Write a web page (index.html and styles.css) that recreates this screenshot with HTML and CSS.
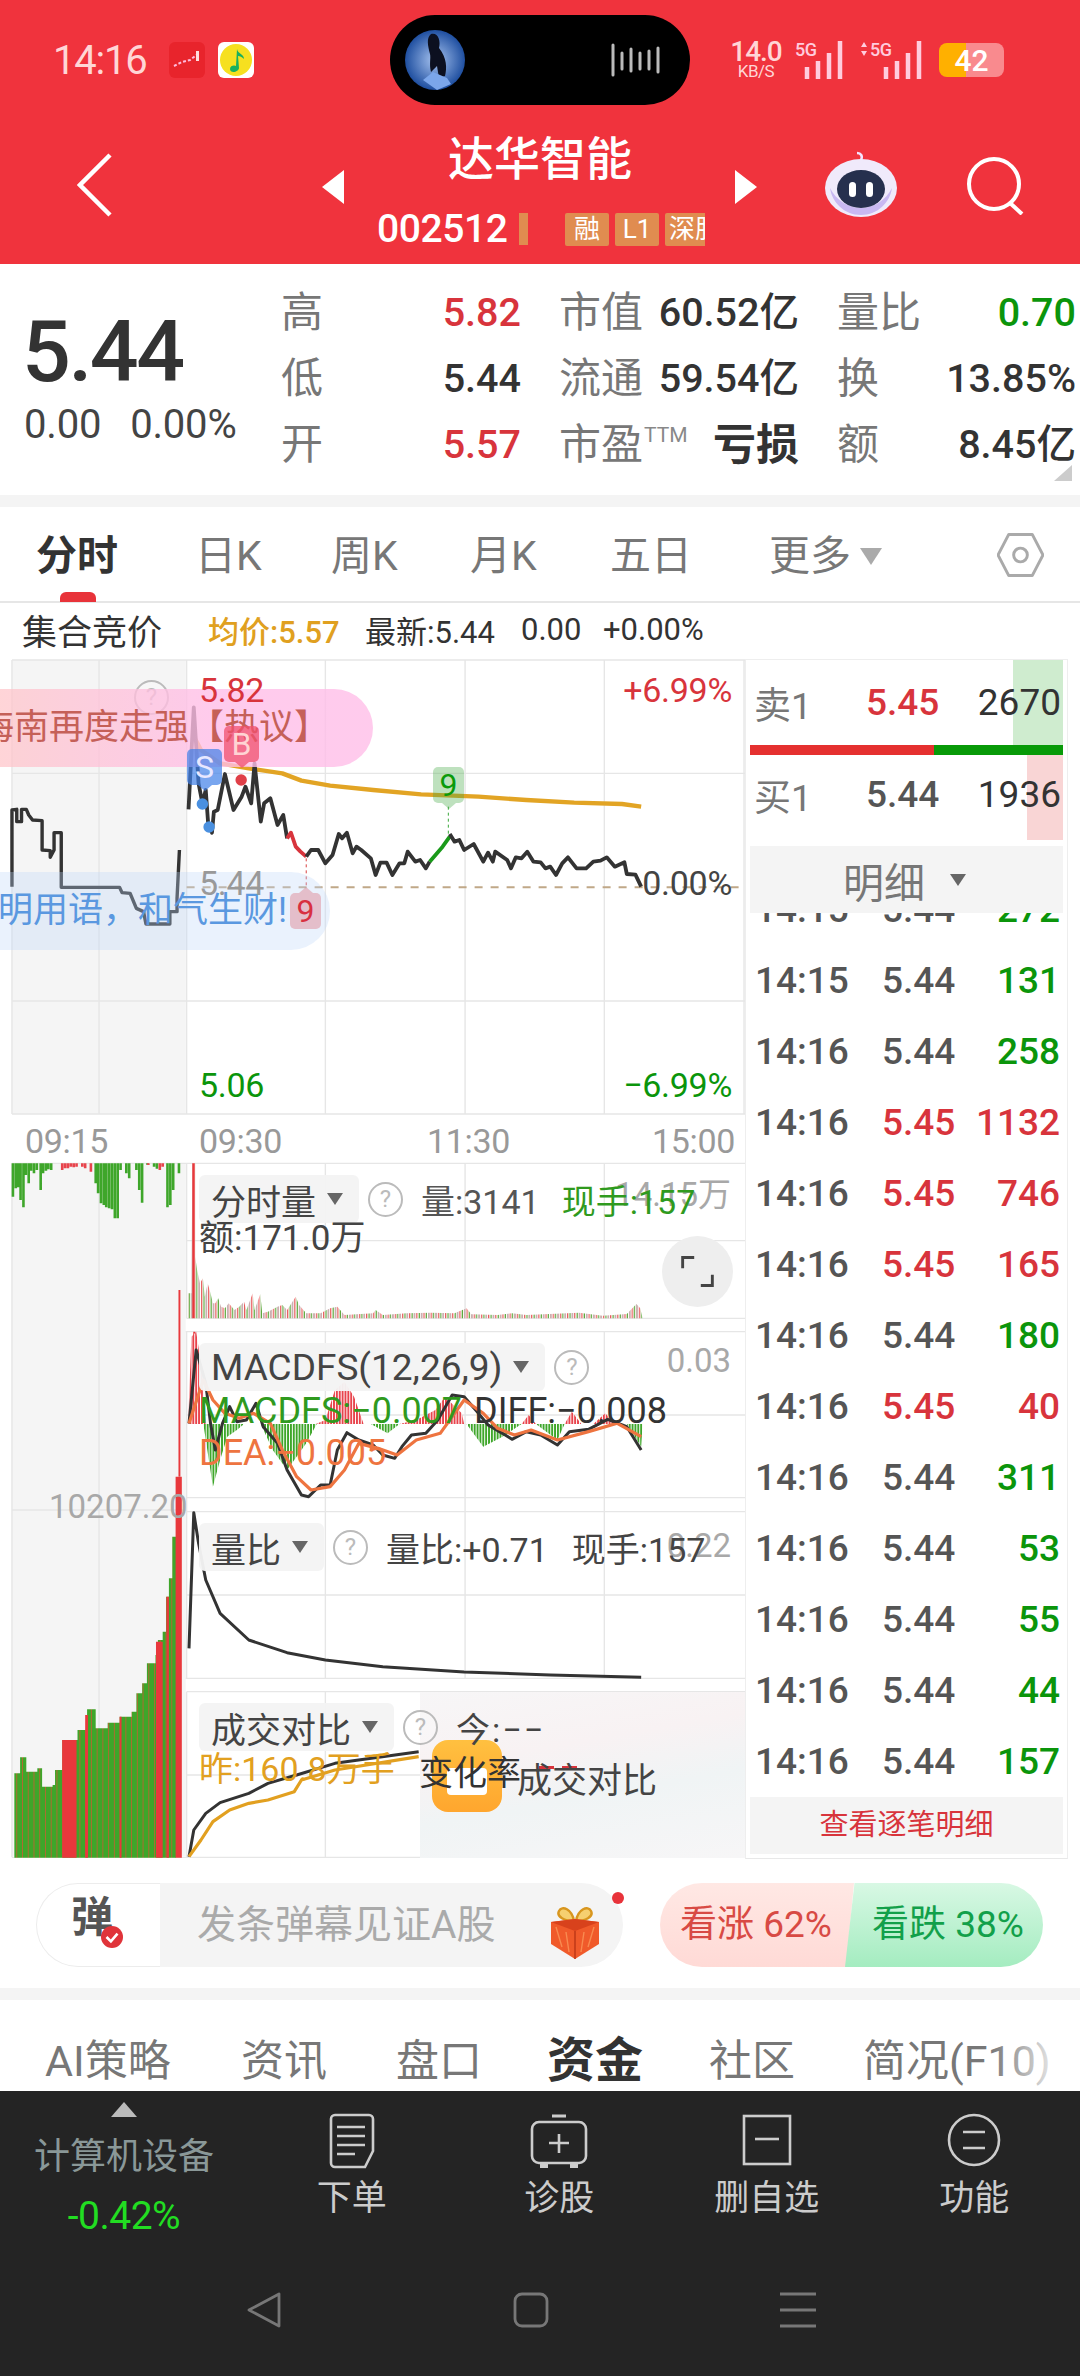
FILE: index.html
```html
<!DOCTYPE html>
<html lang="zh">
<head>
<meta charset="utf-8">
<title>达华智能</title>
<link rel="stylesheet" href="styles.css">
</head>
<body>
<div class="page">
  <header class="header">
    <div class="status">
      <span class="clock">14:16</span>
      <svg class="app-icon" viewBox="0 0 36 36"><rect width="36" height="36" rx="6" fill="#e8242c"/><path d="M5 24l8-4 8-2 9-7" fill="none" stroke="#fbd" stroke-width="2" stroke-dasharray="3 2"/><rect x="27" y="9" width="3" height="10" fill="#fdd"/></svg>
      <svg class="app-icon" viewBox="0 0 36 36"><rect width="36" height="36" rx="6" fill="#fff"/><circle cx="18" cy="18" r="16" fill="#f6e020"/><path d="M19 7c1 5 7 5 7 10-2-2-4-3-6-3l1 12c0 4-9 6-9 1 0-4 5-4 6-3z" fill="#18b060"/></svg>
      <div class="island">
        <svg class="avatar" viewBox="0 0 60 60"><defs><radialGradient id="av"><stop offset="0" stop-color="#a8c4f0"/><stop offset="1" stop-color="#1f4fa0"/></radialGradient></defs><circle cx="30" cy="30" r="30" fill="url(#av)"/><path d="M26 4c7-2 10 7 8 14 8 10 8 20 6 28l-6 2-2-12-6 6c-2-8 0-14-1-18-2-8-4-16 1-20z" fill="#0c1020"/><path d="M18 50l10-8 14 6 4 6-14 6z" fill="#7ba6ea"/></svg>
        <svg class="wave" viewBox="0 0 50 34"><path d="M2 2v30M11 10v16M20 6v22M29 10v16M38 8v18M47 5v24" stroke="#bbb" stroke-width="3" stroke-linecap="round"/></svg>
      </div>
      <div class="speed"><b>14.0</b><small>KB/S</small></div>
      <svg class="signal" viewBox="0 0 50 38"><text x="0" y="15" class="sig-text">5G</text><path d="M12 38V26M23 38V20M34 38V12M45 38V0" stroke="#fcd" stroke-width="4.5"/></svg>
      <svg class="signal wide" viewBox="0 0 64 38"><path d="M4 1l3 5H1zM4 15l3-5H1z" fill="#fcd"/><text x="10" y="15" class="sig-text">5G</text><path d="M26 38V26M37 38V20M48 38V12M59 38V0" stroke="#fcd" stroke-width="4.5"/></svg>
      <div class="battery"><span class="battery-num">42</span></div>
    </div>
    <div class="titlebar">
      <svg class="back" viewBox="0 0 36 64"><path d="M33 2L3 32l30 30" fill="none" stroke="#fff" stroke-width="4.5"/></svg>
      <svg class="arrow-l" viewBox="0 0 22 34"><path d="M22 0v34L0 17z" fill="#fff"/></svg>
      <div class="title-block">
        <div class="title">达华智能</div>
        <div class="code-row">
          <span class="code">002512</span><i class="code-bar"></i>
          <div class="tags"><span class="tag">融</span><span class="tag">L1</span><span class="tag tag-cut">深股</span></div>
        </div>
      </div>
      <svg class="arrow-r" viewBox="0 0 22 34"><path d="M0 0v34l22-17z" fill="#fff"/></svg>
      <svg class="robot" viewBox="0 0 72 66"><path d="M36 9c2-4 0-7-4-7" fill="none" stroke="#f4e4ff" stroke-width="2.5"/><ellipse cx="36" cy="37" rx="36" ry="29" fill="#f0eafb"/><path d="M5 37c2 14 14 27 31 27s29-13 31-27c-6 12-18 20-31 20S11 49 5 37z" fill="#c9b8f2"/><ellipse cx="36" cy="38" rx="24" ry="19" fill="#26304e"/><rect x="24" y="31" width="7" height="15" rx="3.5" fill="#fff"/><rect x="41" y="31" width="7" height="15" rx="3.5" fill="#fff"/></svg>
      <svg class="search" viewBox="0 0 60 58"><circle cx="28" cy="27" r="25" fill="none" stroke="#fff" stroke-width="4"/><path d="M44 46l12 11" stroke="#fff" stroke-width="4"/></svg>
    </div>
  </header>

  <section class="quote">
    <div class="price-box">
      <div class="price">5.44</div>
      <div class="change"><span>0.00</span><span>0.00%</span></div>
    </div>
    <div class="stats">
      <div class="stat"><span>高</span><b class="red">5.82</b></div>
      <div class="stat"><span>市值</span><b>60.52亿</b></div>
      <div class="stat"><span>量比</span><b class="green">0.70</b></div>
      <div class="stat"><span>低</span><b>5.44</b></div>
      <div class="stat"><span>流通</span><b>59.54亿</b></div>
      <div class="stat"><span>换</span><b>13.85%</b></div>
      <div class="stat"><span>开</span><b class="red">5.57</b></div>
      <div class="stat"><span>市盈<sup class="ttm">TTM</sup></span><b class="strong">亏损</b></div>
      <div class="stat"><span>额</span><b>8.45亿</b></div>
    </div>
    <i class="corner"></i>
  </section>
  <div class="divider"></div>

  <nav class="tabs">
    <span class="tab active">分时</span><span class="tab">日K</span><span class="tab">周K</span><span class="tab">月K</span><span class="tab">五日</span>
    <span class="tab more">更多<i class="tri tab-tri"></i></span>
    <svg class="hex" viewBox="0 0 48 46"><path d="M12 2h24l11 21-11 21H12L1 23z" fill="none" stroke="#aaa" stroke-width="3" stroke-linejoin="round"/><circle cx="24" cy="23" r="7" fill="none" stroke="#aaa" stroke-width="3"/></svg>
  </nav>
  <div class="subrow">
    <span class="auction">集合竞价</span><span class="avg">均价:5.57</span><span class="latest">最新:5.44</span><span class="chg">0.00</span><span class="pct">+0.00%</span>
  </div>

  <main class="board">
    <div class="chart">
      <svg class="plot" viewBox="0 0 1557 3660" preserveAspectRatio="none">
        <defs>
          <pattern id="volp" patternUnits="userSpaceOnUse" width="15" height="10"><rect width="15" height="10" fill="#fff"/><rect width="2.5" height="10" fill="#e85a5a"/><rect x="5" width="2.5" height="10" fill="#5aa83a"/><rect x="10" width="2.5" height="10" fill="#b08a8a"/></pattern>
          <pattern id="macdr" patternUnits="userSpaceOnUse" width="6" height="10"><rect width="6" height="10" fill="#fff"/><rect width="4" height="10" fill="#e8444c"/></pattern>
          <pattern id="macdg" patternUnits="userSpaceOnUse" width="6" height="10"><rect width="6" height="10" fill="#fff"/><rect width="4" height="10" fill="#3ea62a"/></pattern>
          <pattern id="lowp" patternUnits="userSpaceOnUse" width="12" height="10"><rect width="12" height="10" fill="#3ea62a"/><rect x="10" width="2" height="10" fill="#b06a30"/></pattern>
        </defs>
        <!-- price panel -->
        <rect x="25" y="30" width="363" height="1362" fill="#f5f5f5"/>
        <g class="grid">
          <path d="M25 30H1557M25 370H1557M25 1053H1557M25 1392H1557M25 30V1392M207 30V1392M390 30V1392M680 30V1392M972 30V1392M1263 30V1392M1555 30V1392"/>
        </g>
        <path class="base" d="M390 712H1557"/>
        <path class="thin-line" d="M25 710V480L35 478V515L45 515V478L55 478L60 495L68 510L88 512V600L105 602L105 622L113 600V548L128 548V712L250 712L255 728L272 730L285 775L300 785L305 822L355 822V785L370 785V745L375 600"/>
        <path class="avgline" d="M405 260L420 300L460 340L520 355L590 370L630 392L690 407L780 420L880 433L1000 440L1100 450L1200 458L1300 462L1340 470"/>
        <path class="priceline" d="M394 478L405 172L415 400L423 460L430 420L435 520L443 548L447 485L455 480L470 372L488 480L505 440L513 410L525 460L532 340L545 515L552 460L565 445L580 525L592 495L600 565"/>
        <path class="priceline red-s" d="M600 565L608 548L618 590L628 605L640 620"/>
        <path class="priceline" d="M640 620L650 600L665 600L680 640L695 615L708 552L715 565L725 548L737 610L745 590L755 600L775 625L785 675L795 638L808 638L820 675L835 640L845 640L852 605L868 635L878 630L890 655L898 635"/>
        <path class="priceline green-s" d="M898 635L925 590L940 560"/>
        <path class="priceline" d="M940 552L950 575L960 570L970 600L990 582L1010 635L1020 608L1030 635L1035 605L1060 630L1068 655L1078 622L1090 625L1102 605L1115 635L1130 637L1140 655L1150 650L1162 675L1175 640L1187 622L1205 655L1225 655L1240 635L1255 632L1268 622L1285 650L1305 637L1310 672L1328 674L1340 710"/>
        <path class="dash-g" d="M937 470V552"/>
        <path class="dash-r" d="M640 625V715"/>
        <ellipse cx="423" cy="462" rx="12" ry="17" fill="#4a90e0"/><ellipse cx="437" cy="531" rx="12" ry="17" fill="#4a90e0"/><ellipse cx="504" cy="390" rx="12" ry="17" fill="#e04048"/>

        <!-- lower panels: coordinates offset by crop origin -->
        <rect x="25" y="1540" width="363" height="2078" fill="#f5f5f5"/>
        <g class="grid">
          <path d="M25 1540H1557M390 1772H1557M390 2005H1557M388 2045H1557M390 2295H1557M390 2543H1557M25 2580H388M390 2585H1557M390 2835H1557M388 3085H1557M390 3125H1557M390 3375H1557M25 3622H1557"/>
          <path d="M25 1540V3622M207 1540V3622M390 1540V2005M390 2045V3085M390 3125V3622M680 1540V2005M680 2045V3085M680 3125V3622M972 1540V2005M972 2045V3085M1263 1540V2005M1263 2045V3085"/>
        </g>
        <g transform="translate(0 1500)">
          <path class="hang" d="M27 40V140M33 40V115M38 40V112M43 40V150M49 40V172M54 40V75M60 40V100M65 40V62M71 40V70M77 40V60M85 40V120M90 40V70M96 40V62M101 40V58M107 40V60M200 40V100M205 40V130M211 40V160M217 40V165M222 40V172M228 40V175M234 40V178M240 40V205M246 40V205M252 40V60M264 40V70M270 40V85M285 40V60M291 40V120M297 40V158M308 40V44M322 40V50M328 40V56M350 40V172M356 40V165M362 40V120M374 40V70"/>
          <path class="hang-r" d="M130 40V60M136 40V55M142 40V55M148 40V50M154 40V52M160 40V50M172 40V50M178 40V55M190 40V65M310 40V45M334 40V60M340 40V50"/>
          <path fill="url(#volp)" d="M393 505V430H400L402 40H408V320L412 360L418 400L424 385L428 440L434 400L440 430L445 460L450 460L456 445L462 470L470 475L478 460L490 480L500 470L510 455L515 480L528 430L532 480L544 432L548 490L560 485L580 470L590 465L600 480L618 440L625 465L640 490L670 490L690 475L705 470L720 495L780 490L785 480L800 495L850 490L900 488L950 490L975 475L985 493L1040 495L1070 490L1100 495L1210 488L1260 497L1310 492L1330 462L1338 475L1343 505Z"/>
          <path class="solid-r" d="M404 40V505M406 545V822"/>
          <path fill="url(#macdr)" d="M393 822L400 560L410 545L420 640L430 822ZM660 822L680 810L700 720L720 695L740 740L760 822ZM835 822L870 810L910 780L930 740L965 790L970 822ZM1090 822L1105 795L1120 822ZM1180 822L1195 785L1215 822ZM1240 822L1265 790L1285 822Z"/>
          <path fill="url(#macdg)" d="M425 822L445 1010L460 930L475 860L495 840L510 822ZM545 822L570 900L600 960L640 880L662 822ZM775 822L810 850L835 822ZM975 822L1010 890L1050 860L1090 822ZM1120 822L1165 870L1180 822ZM1310 822L1340 890L1343 822Z"/>
          <path class="macd-k" d="M395 820L410 600L430 700L440 820L450 900L465 820L480 770L495 815L515 810L535 760L550 830L580 880L600 960L630 1035L645 1040L670 1005L690 1005L705 900L725 848L750 870L780 885L800 915L825 925L840 890L860 855L890 850L915 810L945 735L970 740L1000 790L1020 825L1050 850L1070 868L1100 845L1130 855L1165 885L1190 845L1230 838L1270 808L1310 830L1340 900"/>
          <path class="macd-o" d="M395 820L425 690L445 750L470 790L500 805L530 790L565 820L590 900L620 980L650 1020L690 1010L720 960L750 880L790 895L830 915L870 870L920 850L970 750L1010 790L1040 835L1075 855L1110 840L1165 870L1230 845L1290 820L1340 860"/>
        </g>
        <g transform="translate(0 2550)">
          <path fill="url(#lowp)" d="M30 1073V820H42V772H55V815H78V805H88V860H110V855H115V810H130V720H162V690H182V628H200V685H225V668H250V650H275V635H285V580H297V550H307V490H325V465H330V420H340V395H347V290H353V235H360V110H368V1073Z"/>
          <path fill="#e8383c" d="M130 1073V720H160V1073ZM178 1073V645H184V1073ZM250 1073V650H254V1073ZM326 1073V425H340V1073ZM348 1073V290H353V1073ZM367 1073V-70H380V1073Z"/>
          <path fill="#e8383c" d="M373 -70V-630H377V-70Z"/>
          <path class="macd-k" d="M395 445L405 38L415 130L430 240L460 340L520 420L600 458L680 480L800 500L970 516L1150 525L1340 532"/>
          <path class="macd-k" d="M395 1070L405 990L430 940L460 908L520 880L560 850L620 825L700 790L875 755"/>
          <path class="cmp-o" d="M395 1070L420 1020L445 965L480 930L520 910L560 900L615 875L630 840L700 810L875 770"/>
        </g>
      </svg>

      <i class="help help-top">?</i>
      <div class="danmu pink">海南再度走强【热议】</div>
      <div class="danmu blue">明用语，和气生财!</div>
      <span class="axis a-high red">5.82</span>
      <span class="axis a-low green">5.06</span>
      <span class="axis a-base">5.44</span>
      <span class="axis a-up red">+6.99%</span>
      <span class="axis a-zero">0.00%</span>
      <span class="axis a-down green">−6.99%</span>
      <div class="times"><span>09:15</span><span>09:30</span><span>11:30</span><span>15:00</span></div>
      <span class="flag flag-s">S</span>
      <span class="flag flag-b">B</span>
      <span class="flag flag-g">9</span>
      <span class="flag flag-r">9</span>

      <span class="side-num n-1415">14.15万</span>
      <div class="legend lg-vol">
        <div class="legend-row">
          <span class="chip">分时量<i class="tri"></i></span><i class="help">?</i>
          <span class="lg-a">量:3141</span><span class="lg-b green2">现手:157</span>
        </div>
        <div class="lg-amt">额:171.0万</div>
      </div>
      <button class="expand" type="button"><svg viewBox="0 0 40 40"><path d="M2 16V3h14M38 24v13H24" fill="none" stroke="#444" stroke-width="3.5"/></svg></button>

      <span class="side-num n-003">0.03</span>
      <div class="legend lg-macd">
        <div class="legend-row">
          <span class="chip chip-macd">MACDFS(12,26,9)<i class="tri"></i></span><i class="help">?</i>
        </div>
        <div class="macd-vals"><span class="green2">MACDFS:−0.007</span><span class="diff">DIFF:−0.008</span></div>
        <div class="dea">DEA:−0.005</div>
      </div>
      <span class="vol-max">10207.20</span>

      <span class="side-num n-022">0.22</span>
      <div class="legend lg-ratio">
        <div class="legend-row">
          <span class="chip">量比<i class="tri"></i></span><i class="help">?</i>
          <span class="lg-c">量比:+0.71</span><span class="lg-d">现手:157</span>
        </div>
      </div>

      <div class="toast">
        <div class="toast-app"><i></i></div>
        <i class="toast-dash"></i>
      </div>
      <div class="legend lg-cmp">
        <div class="legend-row">
          <span class="chip">成交对比<i class="tri"></i></span><i class="help">?</i>
          <span class="lg-e">今:−−</span>
        </div>
        <div class="yest">昨:160.8万手</div>
      </div>
      <span class="chg-rate">变化率</span>
      <span class="cmp-title">成交对比</span>
    </div>

    <aside class="side">
      <div class="book sell"><i class="depth"></i><span class="book-l">卖1</span><span class="book-p red">5.45</span><span class="book-v">2670</span></div>
      <div class="ratio"><i class="ratio-r"></i><i class="ratio-g"></i></div>
      <div class="book buy"><i class="depth"></i><span class="book-l">买1</span><span class="book-p">5.44</span><span class="book-v">1936</span></div>
      <div class="detail-head">明细<i class="tri"></i></div>
      <div class="ticks">
        <div class="tick first"><span>14:15</span><span>5.44</span><b class="green">272</b></div>
        <div class="tick"><span>14:15</span><span>5.44</span><b class="green">131</b></div>
        <div class="tick"><span>14:16</span><span>5.44</span><b class="green">258</b></div>
        <div class="tick"><span>14:16</span><span class="red">5.45</span><b class="red">1132</b></div>
        <div class="tick"><span>14:16</span><span class="red">5.45</span><b class="red">746</b></div>
        <div class="tick"><span>14:16</span><span class="red">5.45</span><b class="red">165</b></div>
        <div class="tick"><span>14:16</span><span>5.44</span><b class="green">180</b></div>
        <div class="tick"><span>14:16</span><span class="red">5.45</span><b class="red">40</b></div>
        <div class="tick"><span>14:16</span><span>5.44</span><b class="green">311</b></div>
        <div class="tick"><span>14:16</span><span>5.44</span><b class="green">53</b></div>
        <div class="tick"><span>14:16</span><span>5.44</span><b class="green">55</b></div>
        <div class="tick"><span>14:16</span><span>5.44</span><b class="green">44</b></div>
        <div class="tick"><span>14:16</span><span>5.44</span><b class="green">157</b></div>
      </div>
      <div class="detail-link">查看逐笔明细</div>
    </aside>
  </main>

  <section class="action-row">
    <div class="comment">
      <div class="dan"><b>弹</b><i class="dan-check"><svg viewBox="0 0 20 20"><path d="M5 10l4 4 6-7" fill="none" stroke="#fff" stroke-width="2.4"/></svg></i></div>
      <div class="comment-input">
        <span>发条弹幕见证A股</span>
        <svg class="gift" viewBox="0 0 50 52"><path d="M24 14C22 2 12 -2 9 4c-3 6 6 10 15 10zM26 14C28 2 38 -2 41 4c3 6-6 10-15 10z" fill="#f6d070" stroke="#d8961e" stroke-width="2.4"/><path d="M1 15l24-3 24 3v22L25 52 1 37z" fill="#f05a2a"/><path d="M1 15l24 9 24-9-24-3z" fill="#d8421c"/><path d="M25 24v28" stroke="#c23a18" stroke-width="1.6"/><path d="M6 20l6 20M44 20l-6 20M16 25l3 20M34 25l-3 20" stroke="#f88a50" stroke-width="1.4"/></svg>
        <i class="red-dot"></i>
      </div>
    </div>
    <div class="vote">
      <div class="bull">看涨 62%</div>
      <div class="bear">看跌 38%</div>
    </div>
  </section>
  <div class="divider"></div>

  <nav class="subtabs">
    <span>AI策略</span><span>资讯</span><span>盘口</span><span class="on">资金</span><span>社区</span><span>简况(F10)</span>
    <i class="fade"></i>
  </nav>

  <footer class="footer">
    <div class="toolbar">
      <div class="sector">
        <i class="sector-tri"></i>
        <span class="sector-name">计算机设备</span>
        <span class="sector-pct">-0.42%</span>
      </div>
      <div class="tool">
        <svg class="tool-icon" viewBox="0 0 58 56"><path d="M12 2h34a4 4 0 0 1 4 4v32l-8 16H12a4 4 0 0 1-4-4V6a4 4 0 0 1 4-4z" fill="none" stroke="#ccc" stroke-width="2.6"/><path d="M14 14h28M14 23h28M14 32h28M14 41h18" stroke="#ccc" stroke-width="2.6"/></svg>
        <span>下单</span>
      </div>
      <div class="tool">
        <svg class="tool-icon" viewBox="0 0 58 56"><path d="M22 3h14" stroke="#ccc" stroke-width="3"/><rect x="2" y="9" width="54" height="41" rx="7" fill="none" stroke="#ccc" stroke-width="2.6"/><path d="M29 21v19M19 30h20" stroke="#ccc" stroke-width="2.6"/><path d="M10 50h8v5h-8zM40 50h8v5h-8z" fill="#ccc"/></svg>
        <span>诊股</span>
      </div>
      <div class="tool">
        <svg class="tool-icon" viewBox="0 0 58 56"><rect x="6" y="3" width="46" height="48" fill="none" stroke="#ccc" stroke-width="2.6"/><path d="M17 26h24" stroke="#ccc" stroke-width="2.6"/></svg>
        <span>删自选</span>
      </div>
      <div class="tool">
        <svg class="tool-icon" viewBox="0 0 58 56"><circle cx="29" cy="27" r="25" fill="none" stroke="#ccc" stroke-width="2.6"/><path d="M18 19h22M18 35h22" stroke="#ccc" stroke-width="2.6"/></svg>
        <span>功能</span>
      </div>
    </div>
    <div class="sysbar">
      <svg viewBox="0 0 36 36"><path d="M33 2v32L3 18z" fill="none" stroke="#777" stroke-width="2.8" stroke-linejoin="round"/></svg>
      <svg viewBox="0 0 36 36"><rect x="2" y="2" width="32" height="32" rx="7" fill="none" stroke="#777" stroke-width="2.8"/></svg>
      <svg viewBox="0 0 36 36"><path d="M0 2h36M0 18h36M0 34h36" stroke="#777" stroke-width="3.2"/></svg>
    </div>
  </footer>
</div>
</body>
</html>
```

FILE: styles.css
```css
* { box-sizing: border-box; }
html, body { margin: 0; padding: 0; }
body { width: 1080px; height: 2376px; overflow: hidden; background: #fff; }
.page {
  width: 1080px; height: 2376px; overflow: hidden; position: relative;
  font-family: Roboto, "Noto Sans CJK SC", sans-serif; color: #333;
}
i { font-style: normal; display: block; }
.red { color: #d8343c; }
.green { color: #0b950b; }
.green2 { color: #2f9a1e; }

/* header */
.header { height: 264px; background: #f0333d; color: #fff; padding-top: 15px; }
.status { height: 90px; display: flex; align-items: center; position: relative; padding-left: 53px; }
.clock { width: 116px; font-size: 40px; color: #ffd6d6; letter-spacing: -1.2px; }
.app-icon { width: 36px; height: 36px; margin-right: 13px; }
.island {
  position: absolute; left: 390px; top: 0; width: 300px; height: 90px;
  background: #000; border-radius: 45px; display: flex; align-items: center;
  padding: 0 29px 0 15px; justify-content: space-between;
}
.avatar { width: 60px; height: 60px; }
.wave { width: 50px; height: 34px; }
.speed { position: absolute; left: 729px; top: 25px; display: flex; flex-direction: column; align-items: center; color: #ffd6d6; width: 54px; }
.speed b { font-size: 28px; line-height: 24px; font-weight: 500; letter-spacing: -1px; }
.speed small { font-size: 17px; line-height: 15px; letter-spacing: -0.5px; }
.signal { position: absolute; left: 795px; top: 26px; width: 50px; height: 38px; }
.signal.wide { left: 860px; width: 64px; }
.sig-text { font: 500 18px Roboto, sans-serif; fill: #fcd; letter-spacing: -0.6px; }
.battery {
  position: absolute; left: 939px; top: 28px; width: 65px; height: 34px; border-radius: 8px;
  background: linear-gradient(90deg, #ffb000 0 42%, #f98a8e 42% 100%);
  display: flex; align-items: center; justify-content: center;
}
.battery-num { color: #fff; font-size: 30px; font-weight: 500; }

.titlebar { height: 159px; position: relative; }
.back { position: absolute; left: 77px; top: 48px; width: 36px; height: 64px; }
.arrow-l { position: absolute; left: 322px; top: 65px; width: 22px; height: 34px; }
.arrow-r { position: absolute; left: 735px; top: 65px; width: 22px; height: 34px; }
.robot { position: absolute; left: 825px; top: 46px; width: 72px; height: 66px; }
.search { position: absolute; left: 966px; top: 52px; width: 60px; height: 58px; }
.title-block { position: absolute; left: 377px; top: 27px; width: 328px; }
.title { text-align: center; font-size: 46px; line-height: 54px; width: 326px; font-weight: 500; }
.code-row { display: flex; align-items: center; height: 38px; margin-top: 24px; }
.code { font-size: 39px; font-weight: 500; width: 142px; letter-spacing: -0.4px; }
.code-bar { width: 9px; height: 32px; background: #e08c50; }
.tags { display: flex; gap: 6px; margin-left: 37px; overflow: hidden; width: 140px; }
.tag {
  flex: none; width: 44px; height: 33px; background: #e08c50; color: #fff; font-size: 26px;
  line-height: 33px; text-align: center; border-radius: 2px; overflow: hidden; white-space: nowrap;
}
.tag-cut { width: 43px; text-align: left; padding-left: 4px; }

/* quote */
.quote { height: 231px; display: flex; position: relative; }
.price-box { width: 281px; padding: 36px 0 0 22px; }
.price { font-size: 86px; line-height: 104px; font-weight: 500; letter-spacing: -2.5px; color: #333; }
.change { display: flex; gap: 29px; font-size: 40px; line-height: 46px; color: #444; margin-top: -2px; letter-spacing: -0.2px; padding-left: 2px; }
.stats {
  display: grid; grid-template-columns: 240px 240px 239px; column-gap: 38px;
  grid-auto-rows: 66px; padding-top: 16px;
}
.stat { display: flex; justify-content: space-between; align-items: center; white-space: nowrap; line-height: 50px; }
.stat span { font-size: 42px; color: #777; display: flex; line-height: 50px; }
.stat b { font-size: 39.5px; font-weight: 500; line-height: 50px; }
.stat b.strong { font-size: 43px; font-weight: 700; color: #333; }
.ttm { font-size: 21px; color: #888; line-height: 30px; margin-left: 1px; }
.corner { position: absolute; left: 1054px; top: 201px; width: 0; height: 0; border-left: 18px solid transparent; border-bottom: 16px solid #ccc; }
.divider { height: 12px; background: #f4f4f4; }

/* time tabs */
.tabs {
  height: 96px; border-bottom: 2px solid #e6e6e6; position: relative; padding: 4px 0 0 36px;
  display: grid; grid-template-columns: 159px 136px 139px 140px 159px auto; align-items: center;
}
.tab { font-size: 41px; color: #777; display: flex; align-items: center; line-height: 50px; }
.tab.active { font-weight: 700; color: #333; }
.tab.active::after {
  content: ""; position: absolute; left: 60px; bottom: -1px; width: 36px; height: 10px;
  background: #e8333a; border-radius: 6px 6px 0 0;
}
.tri { width: 0; height: 0; border-left: 8px solid transparent; border-right: 8px solid transparent; border-top: 12px solid #666; }
.tab-tri { border-width: 17px 11px 0; border-top-color: #aaa; margin-left: 9px; }
.hex { position: absolute; left: 997px; top: 25px; width: 47px; height: 46px; }
.subrow { height: 47px; display: flex; align-items: center; padding: 5px 0 0 22px; font-size: 31px; color: #333; white-space: nowrap; }
.auction { font-size: 35px; width: 186px; font-weight: 400; }
.avg { color: #e0a020; width: 157px; font-weight: 500; }
.latest { width: 156px; }
.chg { width: 82px; }

/* board */
.board { display: flex; height: 1220px; position: relative; }
.chart { width: 745px; height: 1220px; position: relative; flex: none; }
.plot { display: block; width: 745px; height: 1220px; }
.plot path { vector-effect: non-scaling-stroke; }
.grid path { fill: none; stroke: #e6e6e6; stroke-width: 1.4; }
.base { fill: none; stroke: #c0a888; stroke-width: 2; stroke-dasharray: 8 8; }
.thin-line { fill: none; stroke: #333; stroke-width: 3.4; stroke-linejoin: round; }
.avgline { fill: none; stroke: #e2a424; stroke-width: 4.4; stroke-linejoin: round; }
.priceline { fill: none; stroke: #333; stroke-width: 3.8; stroke-linejoin: round; }
.red-s { stroke: #d8343c; }
.green-s { stroke: #1a9a1a; }
.dash-g { fill: none; stroke: #3aa83a; stroke-width: 1; stroke-dasharray: 3 3; }
.dash-r { fill: none; stroke: #d84040; stroke-width: 1; stroke-dasharray: 3 3; }
.hang { fill: none; stroke: #3ea62a; stroke-width: 2.6; }
.hang-r { fill: none; stroke: #e8444c; stroke-width: 2.6; }
.solid-r { fill: none; stroke: #e8383c; stroke-width: 2; }
.macd-k { fill: none; stroke: #333; stroke-width: 3; stroke-linejoin: round; }
.macd-o { fill: none; stroke: #ee7440; stroke-width: 3.2; stroke-linejoin: round; }
.cmp-o { fill: none; stroke: #e2a020; stroke-width: 3.2; stroke-linejoin: round; }

.axis { position: absolute; font-size: 34px; line-height: 40px; white-space: nowrap; letter-spacing: -0.3px; }
.a-high { left: 199px; top: 20px; }
.a-low { left: 199px; top: 415px; }
.a-base { left: 199px; top: 213px; color: #999; }
.a-up { right: 13px; top: 20px; }
.a-zero { right: 13px; top: 213px; color: #444; }
.a-down { right: 13px; top: 415px; }
.times {
  position: absolute; left: 25px; top: 471px; width: 706px; display: grid;
  grid-template-columns: 174px 228px 225px auto; font-size: 34px; line-height: 40px; color: #999; letter-spacing: -0.3px;
}
.times span:last-child { text-align: right; }

.help {
  width: 35px; height: 35px; border: 2.5px solid #bbb; border-radius: 50%; color: #bbb;
  font-size: 24px; line-height: 30px; text-align: center; flex: none; font-style: normal; background: rgba(255,255,255,.2);
}
.help-top { position: absolute; left: 134px; top: 30px; }
.danmu {
  position: absolute; height: 78px; border-radius: 0 39px 39px 0; font-size: 35px; line-height: 78px;
  white-space: nowrap;
}
.danmu.pink {
  left: -21px; top: 39px; width: 394px; padding-left: 0; color: #c56058;
  background: linear-gradient(90deg, rgba(255,196,196,.7), rgba(255,190,232,.8) 60%);
}
.danmu.blue {
  left: -2px; top: 222px; width: 332px; color: #5a98e0;
  background: rgba(190,216,250,.32);
}
.flag { position: absolute; text-align: center; border-radius: 5px; font-size: 32px; }
.flag::after {
  content: ""; position: absolute; left: 50%; margin-left: -7px; top: 100%;
  border-left: 7px solid transparent; border-right: 7px solid transparent; border-top: 6px solid;
}
.flag-s { left: 187px; top: 99px; width: 35px; height: 36px; line-height: 36px; color: #e8e8ff; background: rgba(64,128,232,.7); }
.flag-s::after { border-top-color: rgba(64,128,232,.7); }
.flag-b { left: 224px; top: 76px; width: 35px; height: 36px; line-height: 36px; color: #ffd4d4; background: rgba(240,80,110,.75); }
.flag-b::after { border-top-color: rgba(240,80,110,.75); }
.flag-g { left: 433px; top: 117px; width: 31px; height: 36px; line-height: 36px; color: #0a9a0a; background: rgba(70,170,70,.35); }
.flag-g::after { border-top-color: rgba(70,170,70,.35); }
.flag-r { left: 290px; top: 243px; width: 31px; height: 36px; line-height: 36px; color: #d83040; background: rgba(220,120,130,.42); }
.flag-r::after { top: auto; bottom: 100%; border-top: 0; border-bottom: 6px solid rgba(220,120,130,.42); }

.side-num { position: absolute; right: 14px; font-size: 33px; line-height: 40px; color: #a8a8a8; white-space: nowrap; }
.n-1415 { top: 525px; }
.n-003 { top: 691px; }
.n-022 { top: 876px; }
.legend { position: absolute; left: 199px; white-space: nowrap; font-size: 34px; }
.legend-row { display: flex; align-items: center; height: 48px; }
.chip {
  display: flex; align-items: center; height: 48px; padding: 0 16px 0 12px; background: rgba(244,244,244,.96);
  border-radius: 6px; font-size: 35px; color: #444; margin-right: 9px;
}
.chip .tri { margin-left: 11px; }
.lg-vol { top: 525px; }
.lg-a { margin-left: 18px; color: #555; }
.lg-b { margin-left: 22px; }
.lg-amt { color: #444; line-height: 32px; font-size: 35px; }
.expand {
  position: absolute; left: 662px; top: 586px; width: 71px; height: 71px; border-radius: 50%;
  background: #eee; border: 0; padding: 19px; display: block;
}
.expand svg { display: block; width: 33px; height: 33px; }
.lg-macd { top: 693px; }
.chip-macd { font-size: 37px; }
.macd-vals { display: flex; gap: 12px; font-size: 36px; line-height: 40px; margin-top: 0; }
.diff { color: #333; }
.dea { color: #ee7440; font-size: 36px; line-height: 40px; margin-top: 2px; }
.vol-max { position: absolute; left: 49px; top: 838px; font-size: 33px; line-height: 38px; color: #a8a8a8; }
.lg-ratio { top: 873px; }
.lg-c { margin-left: 18px; color: #444; }
.lg-d { margin-left: 24px; color: #444; }
.lg-cmp { top: 1053px; }
.lg-e { margin-left: 18px; color: #444; letter-spacing: 2px; }
.yest { color: #e2a020; font-size: 34px; line-height: 34px; margin-top: 1px; }
.toast {
  position: absolute; left: 420px; top: 1042px; width: 325px; height: 166px;
  background: linear-gradient(170deg, #f7f6f7 0%, #f8f2f3 35%, #f0f4f5 60%, #f7f6f7 100%);
}
.toast-app { position: absolute; left: 12px; top: 48px; width: 70px; height: 72px; border-radius: 16px; background: linear-gradient(#ffc040, #ffa62e); }
.toast-app i { position: absolute; left: 15px; top: 28px; width: 40px; height: 27px; background: #fff; border-radius: 4px; }
.toast-dash { position: absolute; left: 119px; top: 74px; width: 38px; height: 3px; background: linear-gradient(90deg, #d8343c 0 40%, transparent 40% 60%, #d8343c 60%); }
.chg-rate { position: absolute; left: 419px; top: 1103px; font-size: 34px; line-height: 40px; color: #333; }
.cmp-title { position: absolute; left: 517px; top: 1112px; font-size: 35px; line-height: 40px; color: #444; }

/* order side */
.side {
  width: 323px; height: 1200px; margin-top: 9px; border: 1px solid #eee; border-bottom-color: #e8e8e8;
  padding: 0 4px; display: flex; flex-direction: column; background: #fff; flex: none;
}
.book { height: 85px; display: grid; grid-template-columns: 112px auto 1fr; align-items: center; padding: 0 2px 0 4px; position: relative; font-size: 37px; color: #555; }
.book.buy { padding-bottom: 6px; }
.depth { position: absolute; right: 0; top: 0; bottom: 0; }
.sell .depth { width: 50px; background: #cfeccf; }
.buy .depth { width: 36px; background: #f9d5d5; }
.book span { position: relative; }
.book-l { color: #777; }
.book-p { font-weight: 500; }
.book-v { text-align: right; color: #333; }
.ratio { height: 10px; display: flex; flex: none; }
.ratio-r { width: 184px; background: #e5302f; }
.ratio-g { flex: 1; background: #089a08; }
.detail-head {
  flex: none; height: 67px; margin-top: 6px; background: #f4f4f4; display: flex; align-items: center; padding-left: 93px;
  font-size: 41px; color: #777; position: relative; z-index: 1;
}
.detail-head .tri { margin-left: 25px; }
.ticks { flex: 1; overflow: hidden; }
.tick {
  height: 71px; display: grid; grid-template-columns: 127px auto 1fr; align-items: center;
  padding: 0 3px 0 5px; font-size: 37px; color: #555; font-weight: 500;
}
.tick b { text-align: right; font-weight: 500; }
.tick.first { margin-top: -39px; }
.detail-link {
  flex: none; height: 57px; margin-bottom: 4px; background: #f4f4f4; color: #d8343c; text-align: center;
  font-size: 29px; line-height: 57px;
}

/* comment + vote */
.action-row { height: 118px; padding: 13px 37px 0 36px; display: flex; justify-content: space-between; }
.comment { width: 587px; height: 84px; display: flex; position: relative; }
.dan { width: 124px; flex: none; position: relative; background: #fff; border: 1px solid #ececec; border-right: 0; border-radius: 42px 0 0 42px; }
.dan b { position: absolute; left: 34px; top: 10px; font-size: 42px; line-height: 48px; color: #555; font-weight: 700; }
.dan-check { position: absolute; left: 64px; top: 42px; width: 22px; height: 22px; border-radius: 50%; background: #e0343a; }
.dan-check svg { display: block; width: 22px; height: 22px; }
.comment-input { flex: 1; background: #f4f4f4; border-radius: 0 42px 42px 0; position: relative; font-size: 39px; color: #aaa; padding-left: 37px; line-height: 84px; }
.gift { position: absolute; left: 390px; top: 24px; width: 50px; height: 52px; }
.red-dot { position: absolute; left: 452px; top: 9px; width: 12px; height: 12px; border-radius: 50%; background: #e8333a; }
.vote { width: 383px; height: 84px; border-radius: 42px; overflow: hidden; display: flex; position: relative; font-size: 37px; line-height: 84px; }
.bull { width: 194px; padding-left: 20px; color: #d84a44; background: linear-gradient(#ffe8e4, #ffdad6); clip-path: polygon(0 0, 100% 0, 96% 100%, 0 100%); white-space: nowrap; }
.bear { flex: 1; margin-left: -9px; padding-left: 27px; color: #12a04a; background: linear-gradient(#d8f8e4, #a4ecc0); clip-path: polygon(4.8% 0, 100% 0, 100% 100%, 0 100%); white-space: nowrap; }

/* lower tabs */
.subtabs {
  height: 91px; padding-left: 45px; display: grid; grid-template-columns: 196px 155px 151px 162px 154px auto;
  align-items: center; font-size: 43px; color: #777; position: relative; white-space: nowrap; overflow: hidden; padding-top: 30px; line-height: 60px;
}
.subtabs .on { font-size: 48px; font-weight: 700; color: #333; }
.fade { position: absolute; right: 0; top: 0; bottom: 0; width: 90px; background: linear-gradient(90deg, rgba(255,255,255,0), #fff 85%); }

/* footer */
.footer { height: 285px; background: #242424; }
.toolbar { height: 185px; display: grid; grid-template-columns: 248px repeat(4, 207.5px); }
.sector { display: flex; flex-direction: column; align-items: center; padding-top: 11px; }
.sector-tri { width: 0; height: 0; border-left: 13px solid transparent; border-right: 13px solid transparent; border-bottom: 15px solid #bbb; }
.sector-name { font-size: 36px; line-height: 42px; color: #8a9898; margin-top: 19px; }
.sector-pct { font-size: 39px; line-height: 42px; color: #22dd22; margin-top: 17px; letter-spacing: -0.5px; }
.tool { display: flex; flex-direction: column; align-items: center; padding-top: 22px; color: #ccc; font-size: 35px; line-height: 44px; }
.tool-icon { width: 58px; height: 56px; margin-bottom: 8px; }
.sysbar { display: grid; grid-template-columns: repeat(3, 267px); padding: 16px 0 0 130px; justify-items: center; }
.sysbar svg { width: 36px; height: 36px; }
```
